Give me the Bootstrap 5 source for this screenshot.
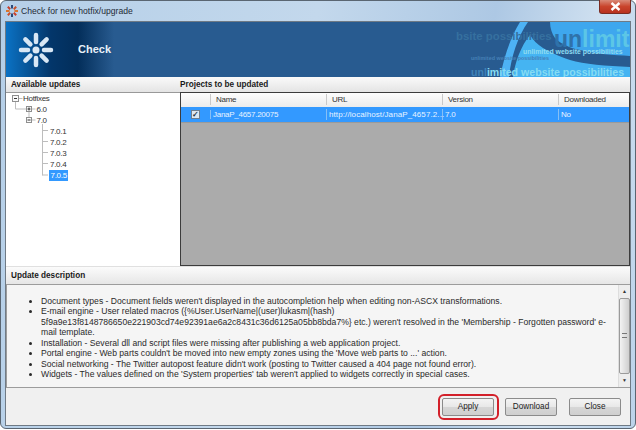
<!DOCTYPE html>
<html><head><meta charset="utf-8">
<link href="https://cdn.jsdelivr.net/npm/bootstrap@5.3.0/dist/css/bootstrap.min.css" rel="stylesheet">
<style>
html,body{margin:0;padding:0;width:636px;height:430px;overflow:hidden;background:#fff;}
body{font-family:"Liberation Sans",Arial,sans-serif;font-size:8px;line-height:11px;color:#222;}
.win{width:636px;height:429px;background:linear-gradient(100deg,#b5cfe8 0%,#c3d8ec 45%,#adc8e4 70%,#cfe0f0 85%,#bcd3ea 100%);border:1px solid #5a6672;border-radius:6px;padding:0 4px 3px 4px;}
.ttl{height:20px;}
.ttl-ico{margin-left:1px;}
.ttl-text{font-size:8.6px;color:#1e2a36;margin-left:3px;}
.xbtn{width:32px;height:14px;background:linear-gradient(#d98a78,#c9442c 50%,#b8321f);border:1px solid #7a2c22;border-top:0;border-radius:0 0 3px 3px;margin-top:-1px;}
.body-box{width:626px;height:405px;background:#f0f0f0;border:1px solid #6f7a85;}
.bnr{height:55px;background:linear-gradient(90deg,#0b72c4 0,#03366a 45px,#032e5a 72px,#285b90 108px,#285b90 100%);position:relative;overflow:hidden;}
.bnr-title{color:#e8f0f8;font-weight:700;font-size:11px;margin-left:72px;}
.swirl{position:absolute;left:0;top:0;}
.sw{position:absolute;white-space:nowrap;font-weight:700;line-height:11px;}
.sw1{left:450px;top:9px;font-size:11.4px;color:#36709f;}
.sw2{left:548px;top:8px;font-size:23px;line-height:18px;color:#5cc6e6;}
.sw2 i{font-style:normal;color:#2f72aa;}
.sw3{left:517px;top:26px;font-size:6.900px;line-height:7px;color:#8fdcf0;}
.sw4{left:465px;top:33px;font-size:5.400px;line-height:6px;color:#4580b6;}
.sw5{left:465px;top:45px;font-size:10.600px;line-height:10px;color:#86dcf2;}
.sw5 i{font-style:normal;color:#3f82b8;}
.sec-h{height:15px;background:linear-gradient(#fafafa,#e4e4e4);font-weight:700;font-size:8.200px;color:#1a1a1a;line-height:15px;padding-left:5px;}
.sec-l{width:169px;flex:none;}
.mid{height:175px;}
.tree{width:174px;flex:none;background:#fff;border-top:1px solid #999;position:relative;}
.gridbox{width:450px;flex:none;background:#ababab;border:1px solid #3c3c3c;letter-spacing:-.27px;}
.tnode{position:absolute;white-space:nowrap;line-height:11px;font-size:8px;letter-spacing:-.3px;color:#333;}
.tsel{background:#3399ff;color:#fff;padding:0 1.500px;left:43px;}
.gh{height:14px;background:linear-gradient(#fdfdfd,#ececec);color:#333;}
.gr{height:16px;background:#3399ff;color:#e8f3ff;border-bottom:1px solid #9a9a9a;}
.c0{width:30px;flex:none;border-right:1px solid #c9c9c9;}
.cx{width:116px;flex:none;border-right:1px solid #c9c9c9;}
.c4{flex:1;}
.gh .cx,.gh .c4{padding-left:5px;}
.gr .cx,.gr .c4{padding-left:2px;}
.gr .c0,.gr .cx{border-right-color:#86bff5;}
.gr .curl{letter-spacing:.1px;white-space:nowrap;}
.ck{width:9px;height:9px;background:#dfe8f2;border:1px solid #6f7f90;color:#234;font-size:8px;line-height:7px;text-align:center;font-weight:700;letter-spacing:0;}
.ud-h{height:18px;background:linear-gradient(#fbfbfb,#e6e6e6);font-weight:700;font-size:8.200px;color:#1a1a1a;line-height:18px;padding-left:5px;border-top:1px solid #e0e0e0;}
.ud{height:105px;background:#f5f5f5;border-top:1px solid #9c9c9c;border-bottom:1px solid #9c9c9c;border-left:1px solid #9c9c9c;}
.ud-txt{flex:1;padding:11px 0 0 0;font-size:8.620px;line-height:10.500px;color:#2a2a2a;}
.ud-txt ul{margin:0;padding-left:34px;}
.vs{width:12px;flex:none;background:#ededed;border-left:1px solid #ddd;}
.vs-a{height:13px;font-size:5px;line-height:13px;text-align:center;color:#333;}
.vs-t{flex:1;background:linear-gradient(90deg,#f3f3f3,#cfcfcf);border:1px solid #9a9a9a;border-radius:2px;}
.gl{width:5px;border-top:1px solid #777;border-bottom:1px solid #777;height:5px;}
.foot{height:37px;}
.wbtn{width:52px;height:18px;padding:0;border:1px solid #8b8b8b;border-radius:2px;background:linear-gradient(#f4f4f4,#e8e8e8 48%,#d6d6d6 52%,#cfcfcf);font-size:8.200px;line-height:15px;color:#222;}
.apply-wrap{border:2.500px solid #d3202a;border-radius:6px;padding:2px 3px 2px 2.500px;margin-right:6px;}
.gap1{margin-right:12px;}
.gap2{margin-right:9px;}
</style></head>
<body>
<div class="win d-flex flex-column">
  <div class="ttl d-flex align-items-start justify-content-between">
    <div class="d-flex align-items-center" style="height:20px;">
      <svg class="ttl-ico" width="12" height="12" viewBox="0 0 12 12"><g stroke-width="2"><path d="M6 0v3.600M6 8.400V12" stroke="#2a4a7a"/><path d="M0 6h3.600M8.400 6H12" stroke="#d9742a"/><path d="M1.800 1.800l2.400 2.400M7.800 7.800l2.400 2.400" stroke="#c8402a"/><path d="M10.200 1.800L7.800 4.200M4.200 7.800l-2.400 2.400" stroke="#c8502a"/></g></svg>
      <span class="ttl-text">Check for new hotfix/upgrade</span>
    </div>
    <div class="xbtn d-flex align-items-center justify-content-center">
      <svg width="11" height="9" viewBox="0 0 11 9"><path d="M1.500 1l8 7M9.500 1l-8 7" stroke="#fff" stroke-width="2.400"/></svg>
    </div>
  </div>
  <div class="body-box d-flex flex-column">
    <div class="bnr d-flex align-items-center">
      <svg class="swirl" width="624" height="55" viewBox="0 0 624 55">
        <circle cx="30" cy="28" r="3.500" fill="#dbe9f5"/>
        <g stroke="#d8e7f5" stroke-width="4.500" stroke-linecap="round">
          <path d="M30 13v7M30 36v7M15 28h7M38 28h7M19.400 17.400l5 5M35.600 33.600l5 5M40.600 17.400l-5 5M24.400 33.600l-5 5"/>
        </g>
        <path d="M514 0C505 14 498 35 494 55H503C505 35 512 14 522 0Z" fill="#4db2f5"/>
        <path d="M524 13C515 24 509 40 507 55H624V45C600 44 578 42 564 38 552 34 544 30 537 26 531 22 527 18 524 13Z" fill="#45b4f2"/>
        <path d="M544 0C544 6 546 12 549 16 555 22 564 26 574 28 590 32 608 33 624 34V0Z" fill="#3ea7ee"/>
      </svg>
      <span class="bnr-title position-relative">Check</span>
      <span class="sw sw1">bsite possibilities</span>
      <span class="sw sw2"><i>un</i>limit</span>
      <span class="sw sw4">unlimited website possibilities</span>
      <span class="sw sw3">unlimited website possibilities</span>
      <span class="sw sw5"><i>unl</i>imited website possibilities</span>
    </div>
    <div class="d-flex">
      <div class="sec-h sec-l">Available updates</div>
      <div class="sec-h flex-fill">Projects to be updated</div>
    </div>
    <div class="d-flex mid">
      <div class="tree">
        <svg class="position-absolute" style="left:0;top:0" width="70" height="90" viewBox="0 0 70 90">
          <g stroke="#bdbdbd" fill="none">
            <path d="M12.500 5.500h4M9.500 8.500v7.500h11M23 18.500v6M25.500 16h4M25.500 27h4"/>
            <path d="M36.500 31v51.500M36.500 37.500h5.500M36.500 48.500h5.500M36.500 59.500h5.500M36.500 70.500h5.500M36.500 82h5.500"/>
          </g>
          <g fill="#fafafa" stroke="#8f8f8f">
            <rect x="6.500" y="2.500" width="6" height="6"/>
            <rect x="20.500" y="13.500" width="5" height="5"/>
            <rect x="20.500" y="24.500" width="5" height="5"/>
          </g>
          <path d="M8 5.500h3M21.500 16h3M23 14.500v3M21.500 27h3" stroke="#333"/>
        </svg>
        <span class="tnode" style="left:17px;top:0;">Hotfixes</span>
        <span class="tnode" style="left:30.500px;top:11px;">6.0</span>
        <span class="tnode" style="left:30.500px;top:22px;">7.0</span>
        <span class="tnode" style="left:44px;top:33px;">7.0.1</span>
        <span class="tnode" style="left:44px;top:44px;">7.0.2</span>
        <span class="tnode" style="left:44px;top:55px;">7.0.3</span>
        <span class="tnode" style="left:44px;top:66px;">7.0.4</span>
        <span class="tnode tsel" style="top:77px;">7.0.5</span>
      </div>
      <div class="gridbox">
        <div class="gh d-flex align-items-center">
          <div class="c0">&nbsp;</div><div class="cx">Name</div><div class="cx">URL</div><div class="cx">Version</div><div class="c4">Downloaded</div>
        </div>
        <div class="gr d-flex align-items-center">
          <div class="c0 d-flex justify-content-center"><div class="ck">✓</div></div>
          <div class="cx">JanaP_4657.20075</div>
          <div class="cx curl">http://localhost/JanaP_4657.2...</div>
          <div class="cx">7.0</div>
          <div class="c4">No</div>
        </div>
      </div>
    </div>
    <div class="ud-h">Update description</div>
    <div class="ud d-flex">
      <div class="ud-txt">
        <ul>
          <li>Document types - Document fields weren't displayed in the autocompletion help when editing non-ASCX transformations.</li>
          <li>E-mail engine - User related macros ({%User.UserName|(user)lukasm|(hash)<br>5f9a9e13f8148786650e221903cd74e92391ae6a2c8431c36d6125a05bb8bda7%} etc.) weren't resolved in the 'Membership - Forgotten password' e-<br>mail template.</li>
          <li>Installation - Several dll and script files were missing after publishing a web application project.</li>
          <li>Portal engine - Web parts couldn't be moved into new empty zones using the 'Move web parts to ...' action.</li>
          <li>Social networking - The Twitter autopost feature didn't work (posting to Twitter caused a 404 page not found error).</li>
          <li>Widgets - The values defined on the 'System properties' tab weren't applied to widgets correctly in special cases.</li>
        </ul>
      </div>
      <div class="vs d-flex flex-column">
        <div class="vs-a">▲</div>
        <div class="vs-t d-flex align-items-center justify-content-center"><div class="gl"></div></div>
        <div class="vs-a">▼</div>
      </div>
    </div>
    <div class="foot d-flex align-items-center justify-content-end">
      <div class="apply-wrap d-flex"><button class="wbtn" type="button">Apply</button></div>
      <button class="wbtn gap1" type="button">Download</button>
      <button class="wbtn gap2" type="button">Close</button>
    </div>
  </div>
</div>
</body></html>
